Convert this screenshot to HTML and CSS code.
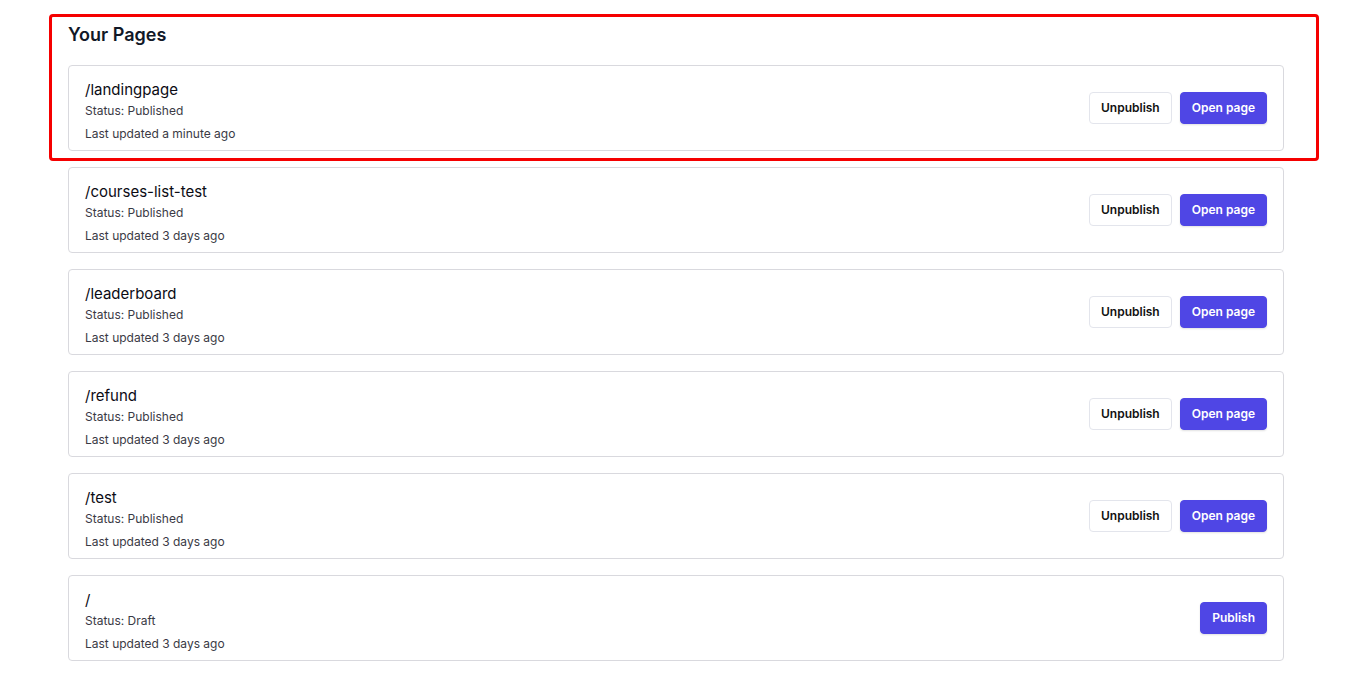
FILE: index.html
```html
<!DOCTYPE html>
<html>
<head>
<meta charset="utf-8">
<link rel="stylesheet" href="styles.css">
</head>
<body>
<main class="pages">
  <h2 class="pages-title">Your Pages</h2>
  <ul class="page-list">
    <li class="page-card">
      <div class="page-info">
        <div class="page-path">/landingpage</div>
        <div class="page-status">Status: Published</div>
        <div class="page-updated">Last updated a minute ago</div>
      </div>
      <div class="page-actions">
        <button class="btn btn-outline">Unpublish</button>
        <button class="btn btn-primary">Open page</button>
      </div>
    </li>
    <li class="page-card">
      <div class="page-info">
        <div class="page-path">/courses-list-test</div>
        <div class="page-status">Status: Published</div>
        <div class="page-updated">Last updated 3 days ago</div>
      </div>
      <div class="page-actions">
        <button class="btn btn-outline">Unpublish</button>
        <button class="btn btn-primary">Open page</button>
      </div>
    </li>
    <li class="page-card">
      <div class="page-info">
        <div class="page-path">/leaderboard</div>
        <div class="page-status">Status: Published</div>
        <div class="page-updated">Last updated 3 days ago</div>
      </div>
      <div class="page-actions">
        <button class="btn btn-outline">Unpublish</button>
        <button class="btn btn-primary">Open page</button>
      </div>
    </li>
    <li class="page-card">
      <div class="page-info">
        <div class="page-path">/refund</div>
        <div class="page-status">Status: Published</div>
        <div class="page-updated">Last updated 3 days ago</div>
      </div>
      <div class="page-actions">
        <button class="btn btn-outline">Unpublish</button>
        <button class="btn btn-primary">Open page</button>
      </div>
    </li>
    <li class="page-card">
      <div class="page-info">
        <div class="page-path">/test</div>
        <div class="page-status">Status: Published</div>
        <div class="page-updated">Last updated 3 days ago</div>
      </div>
      <div class="page-actions">
        <button class="btn btn-outline">Unpublish</button>
        <button class="btn btn-primary">Open page</button>
      </div>
    </li>
    <li class="page-card">
      <div class="page-info">
        <div class="page-path">/</div>
        <div class="page-status">Status: Draft</div>
        <div class="page-updated">Last updated 3 days ago</div>
      </div>
      <div class="page-actions">
        <button class="btn btn-primary">Publish</button>
      </div>
    </li>
  </ul>
  <div class="highlight"></div>
</main>
</body>
</html>
```

FILE: styles.css
```css
* { box-sizing: border-box; }
html, body {
  margin: 0;
  padding: 0;
  background: #ffffff;
  font-family: Inter, "Noto Sans", sans-serif;
  color: #111827;
}
.pages {
  position: relative;
  width: 1216px;
  margin-left: 68px;
  padding-top: 22px;
}
.pages-title {
  margin: 0 0 17px 0;
  font-size: 18px;
  line-height: 26px;
  font-weight: 600;
  color: #111827;
}
.page-list {
  list-style: none;
  margin: 0;
  padding: 0;
  display: flex;
  flex-direction: column;
  gap: 16px;
}
.page-card {
  display: flex;
  align-items: center;
  justify-content: space-between;
  padding: 12px 16px 8px 16px;
  border: 1px solid #d9d9de;
  border-radius: 4px;
  background: #fff;
}
.page-info {
  display: flex;
  flex-direction: column;
}
.page-path {
  font-size: 15px;
  line-height: 24px;
  color: #0b0b14;
}
.page-status {
  font-size: 12px;
  line-height: 18px;
  color: #3a3a45;
}
.page-updated {
  margin-top: 6px;
  font-size: 12px;
  line-height: 16px;
  color: #3a3a45;
}
.page-actions {
  display: flex;
  gap: 8px;
  align-items: center;
  margin-top: -5px;
}
.btn {
  font-family: Inter, "Noto Sans", sans-serif;
  font-size: 12px;
  font-weight: 600;
  height: 32px;
  padding: 0 11px;
  border-radius: 4px;
  cursor: pointer;
}
.btn-outline {
  background: #fff;
  color: #111;
  border: 1px solid #e3e5ec;
}
.btn-primary {
  background: #4f46e5;
  color: #fff;
  border: 1px solid #4f46e5;
  box-shadow: 0 1px 2px rgba(0,0,0,0.12);
}
.highlight {
  position: absolute;
  left: -19px;
  top: 14px;
  width: 1270px;
  height: 147px;
  border: 3px solid #f50000;
  border-radius: 4px;
  pointer-events: none;
}
```
